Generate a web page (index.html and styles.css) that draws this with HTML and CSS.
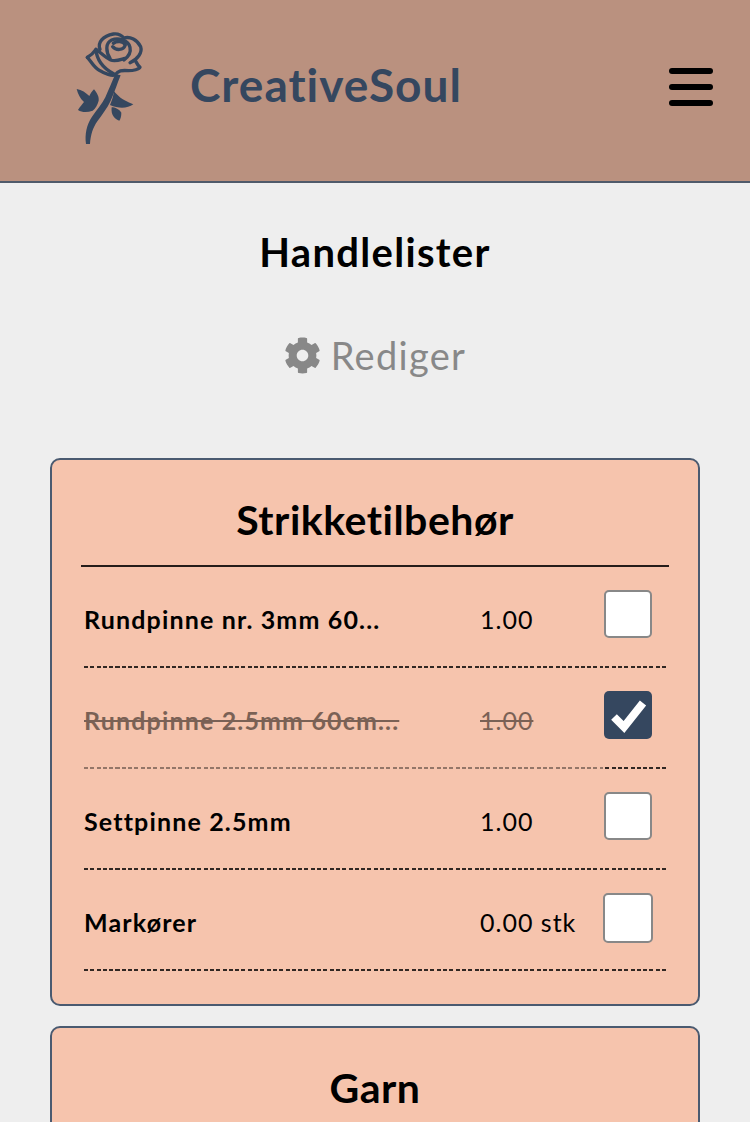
FILE: index.html
```html
<!DOCTYPE html>
<html lang="no">
<head>
    <meta charset="UTF-8">
    <meta name="viewport" content="width=device-width, initial-scale=1.0">
    <title>CreativeSoul</title>
    <link rel="stylesheet" href="styles.css">
</head>
<body>
    <div class="page">
        <header class="topbar">
            <a class="brand">
                <svg class="rose" viewBox="0 0 390 450">
                    <path class="rose-fill" d="M108 402c-4-30 2-58 18-82 14-20 30-38 40-58 10-22 20-48 30-70l16 4c-10 24-18 50-30 76-10 22-26 42-40 62-14 20-20 42-22 68z"/>
                    <path class="rose-fill" d="M80 237C95 240 108 248 118 258C122 250 126 244 132 238C142 250 148 262 146 272C142 286 136 296 128 302C112 308 96 308 84 300C90 290 98 282 102 276C90 266 84 252 80 237z"/>
                    <path class="rose-fill" d="M192 244C205 258 212 268 250 283C232 296 205 296 180 285C186 272 190 258 192 244z"/>
                    <path class="rose-fill" d="M185 292C195 292 208 298 214 308C214 318 212 326 208 332C194 328 182 315 185 292z"/>
                    <path class="rose-line" d="M150 118C142 98 158 78 190 72C205 70 215 76 222 84C240 78 262 90 272 110C278 128 262 148 240 158"/>
                    <path class="rose-line" d="M112 142C122 136 130 130 138 118C150 126 165 142 182 150C195 156 208 150 225 145"/>
                    <path class="rose-line" d="M112 142C125 155 130 172 150 182C165 192 185 198 195 195C205 182 215 180 235 182C250 182 268 178 270 172C262 165 258 155 255 150"/>
                    <path class="rose-line" d="M138 118C140 150 160 175 192 192"/>
                    <path class="rose-line" d="M180 145C168 125 165 100 185 90C205 82 235 90 240 112C243 125 235 140 222 150"/>
                    <path class="rose-line" d="M188 110C198 122 220 122 226 105C220 92 200 92 190 100"/>
                </svg>
                <span class="brand-name">CreativeSoul</span>
            </a>
            <div class="burger">
                <span></span>
                <span></span>
                <span></span>
            </div>
        </header>

        <main class="content">
            <h1 class="page-title">Handlelister</h1>
            <a class="edit-link">
                <svg class="gear" viewBox="0 0 512 512"><path d="M487.4 315.7l-42.6-24.6c4.3-23.2 4.3-47 0-70.2l42.6-24.6c4.9-2.8 7.1-8.6 5.5-14-11.1-35.6-30-67.8-54.7-94.6-3.8-4.1-10-5.1-14.8-2.3L380.8 110c-17.9-15.4-38.5-27.3-60.8-35.1V25.8c0-5.6-3.9-10.5-9.4-11.7-36.7-8.2-74.3-7.8-109.2 0-5.5 1.2-9.4 6.1-9.4 11.7V75c-22.2 7.9-42.8 19.8-60.8 35.1L88.7 85.5c-4.9-2.8-11-1.9-14.8 2.3-24.7 26.7-43.6 58.9-54.7 94.6-1.7 5.4.6 11.2 5.5 14L67.3 221c-4.3 23.2-4.3 47 0 70.2l-42.6 24.6c-4.9 2.8-7.1 8.6-5.5 14 11.1 35.6 30 67.8 54.7 94.6 3.8 4.1 10 5.1 14.8 2.3l42.6-24.6c17.9 15.4 38.5 27.3 60.8 35.1v49.2c0 5.6 3.9 10.5 9.4 11.7 36.7 8.2 74.3 7.8 109.2 0 5.5-1.2 9.4-6.1 9.4-11.7v-49.2c22.2-7.9 42.8-19.8 60.8-35.1l42.6 24.6c4.9 2.8 11 1.9 14.8-2.3 24.7-26.7 43.6-58.9 54.7-94.6 1.5-5.5-.7-11.3-5.6-14.1zM256 336c-44.1 0-80-35.9-80-80s35.9-80 80-80 80 35.9 80 80-35.9 80-80 80z"/></svg>
                <span>Rediger</span>
            </a>

            <section class="card">
                <h2 class="card-title">Strikketilbehør</h2>
                <div class="items">
                    <div class="item">
                        <div class="item-name">Rundpinne nr. 3mm 60...</div>
                        <div class="item-qty">1.00</div>
                        <div class="item-check"><span class="box"></span></div>
                    </div>
                    <div class="item done">
                        <div class="item-name">Rundpinne 2.5mm 60cm...</div>
                        <div class="item-qty">1.00</div>
                        <div class="item-check">
                            <span class="box checked">
                                <svg viewBox="0 0 48 48"><polyline points="10,26 20,36 39,12"/></svg>
                            </span>
                        </div>
                    </div>
                    <div class="item">
                        <div class="item-name">Settpinne 2.5mm</div>
                        <div class="item-qty">1.00</div>
                        <div class="item-check"><span class="box"></span></div>
                    </div>
                    <div class="item">
                        <div class="item-name">Markører</div>
                        <div class="item-qty">0.00 stk</div>
                        <div class="item-check"><span class="box big"></span></div>
                    </div>
                </div>
            </section>

            <section class="card">
                <h2 class="card-title">Garn</h2>
            </section>
        </main>
    </div>
</body>
</html>
```

FILE: styles.css
```css
* {
    box-sizing: border-box;
}
body {
    margin: 0;
    background: #eeeeee;
    font-family: Lato, "Open Sans", sans-serif;
    color: #000;
}
.page {
    height: 100vh;
    overflow: hidden;
}
.topbar {
    height: 183px;
    background: #ba917f;
    border-bottom: 2px solid #4f5a6a;
    display: flex;
    align-items: center;
    justify-content: space-between;
    padding: 0 37px 0 50px;
}
.brand {
    display: flex;
    align-items: center;
    gap: 10px;
    margin-top: -12px;
}
.rose {
    width: 130px;
    height: 150px;
}
.rose-fill {
    fill: #35475f;
}
.rose-line {
    fill: none;
    stroke: #35475f;
    stroke-width: 10;
    stroke-linecap: round;
    stroke-linejoin: round;
}
.brand-name {
    font-size: 46px;
    font-weight: 700;
    letter-spacing: 1px;
    color: #35475f;
}
.burger {
    display: flex;
    flex-direction: column;
    gap: 10px;
    width: 44px;
    margin-top: -8px;
}
.burger span {
    height: 6px;
    border-radius: 3px;
    background: #000;
}
.content {
    padding: 0 50px;
    display: flex;
    flex-direction: column;
    align-items: stretch;
}
.page-title {
    margin: 46px 0 0;
    height: 46px;
    line-height: 46px;
    font-size: 40px;
    font-weight: 700;
    letter-spacing: 1.3px;
    text-align: center;
}
.edit-link {
    margin-top: 57px;
    height: 46px;
    display: flex;
    align-items: center;
    justify-content: center;
    gap: 10px;
    font-size: 38px;
    letter-spacing: 1.3px;
    color: #888888;
}
.gear {
    width: 37px;
    height: 37px;
    fill: #888888;
}
.card {
    margin-bottom: 20px;
    padding: 0 29px;
    background: #f6c4ad;
    border: 2px solid #4a5a70;
    border-radius: 10px;
}
.edit-link + .card {
    margin-top: 80px;
}
.card-title {
    margin: 0;
    height: 107px;
    line-height: 119px;
    font-size: 41px;
    font-weight: 700;
    letter-spacing: 0.5px;
    text-align: center;
    border-bottom: 2px solid rgba(0, 0, 0, 0.85);
}
.card:last-child .card-title {
    border-bottom: 0;
}
.items {
    padding: 0 3px 33px;
}
.item {
    display: flex;
    height: 101px;
    font-size: 25px;
}
.item-name,
.item-qty,
.item-check {
    display: flex;
    align-items: center;
    background: repeating-linear-gradient(90deg, rgba(0, 0, 0, 0.8) 0 4px, transparent 4px 6.3px) left bottom / 100% 2px no-repeat;
}
.item-name {
    width: 396px;
    padding-top: 3px;
    font-weight: 700;
    letter-spacing: 1.15px;
}
.item-qty {
    width: 123px;
    padding-top: 3px;
    letter-spacing: 1px;
}
.item-check {
    flex: 1;
    padding-bottom: 8px;
    background-image: repeating-linear-gradient(270deg, rgba(0, 0, 0, 0.8) 0 4px, transparent 4px 6.3px);
}
.item.done .item-name,
.item.done .item-qty {
    opacity: 0.5;
    text-decoration: line-through;
}
.box {
    display: block;
    width: 48px;
    height: 48px;
    margin-left: 1px;
    background: #fff;
    border: 2px solid #888888;
    border-radius: 5px;
}
.box.big {
    width: 50px;
    height: 50px;
    margin: 2px 0 0;
}
.box.checked {
    background: #35475f;
    border: 0;
}
.box.checked svg {
    display: block;
    width: 48px;
    height: 48px;
    fill: none;
    stroke: #fff;
    stroke-width: 8;
}
```
